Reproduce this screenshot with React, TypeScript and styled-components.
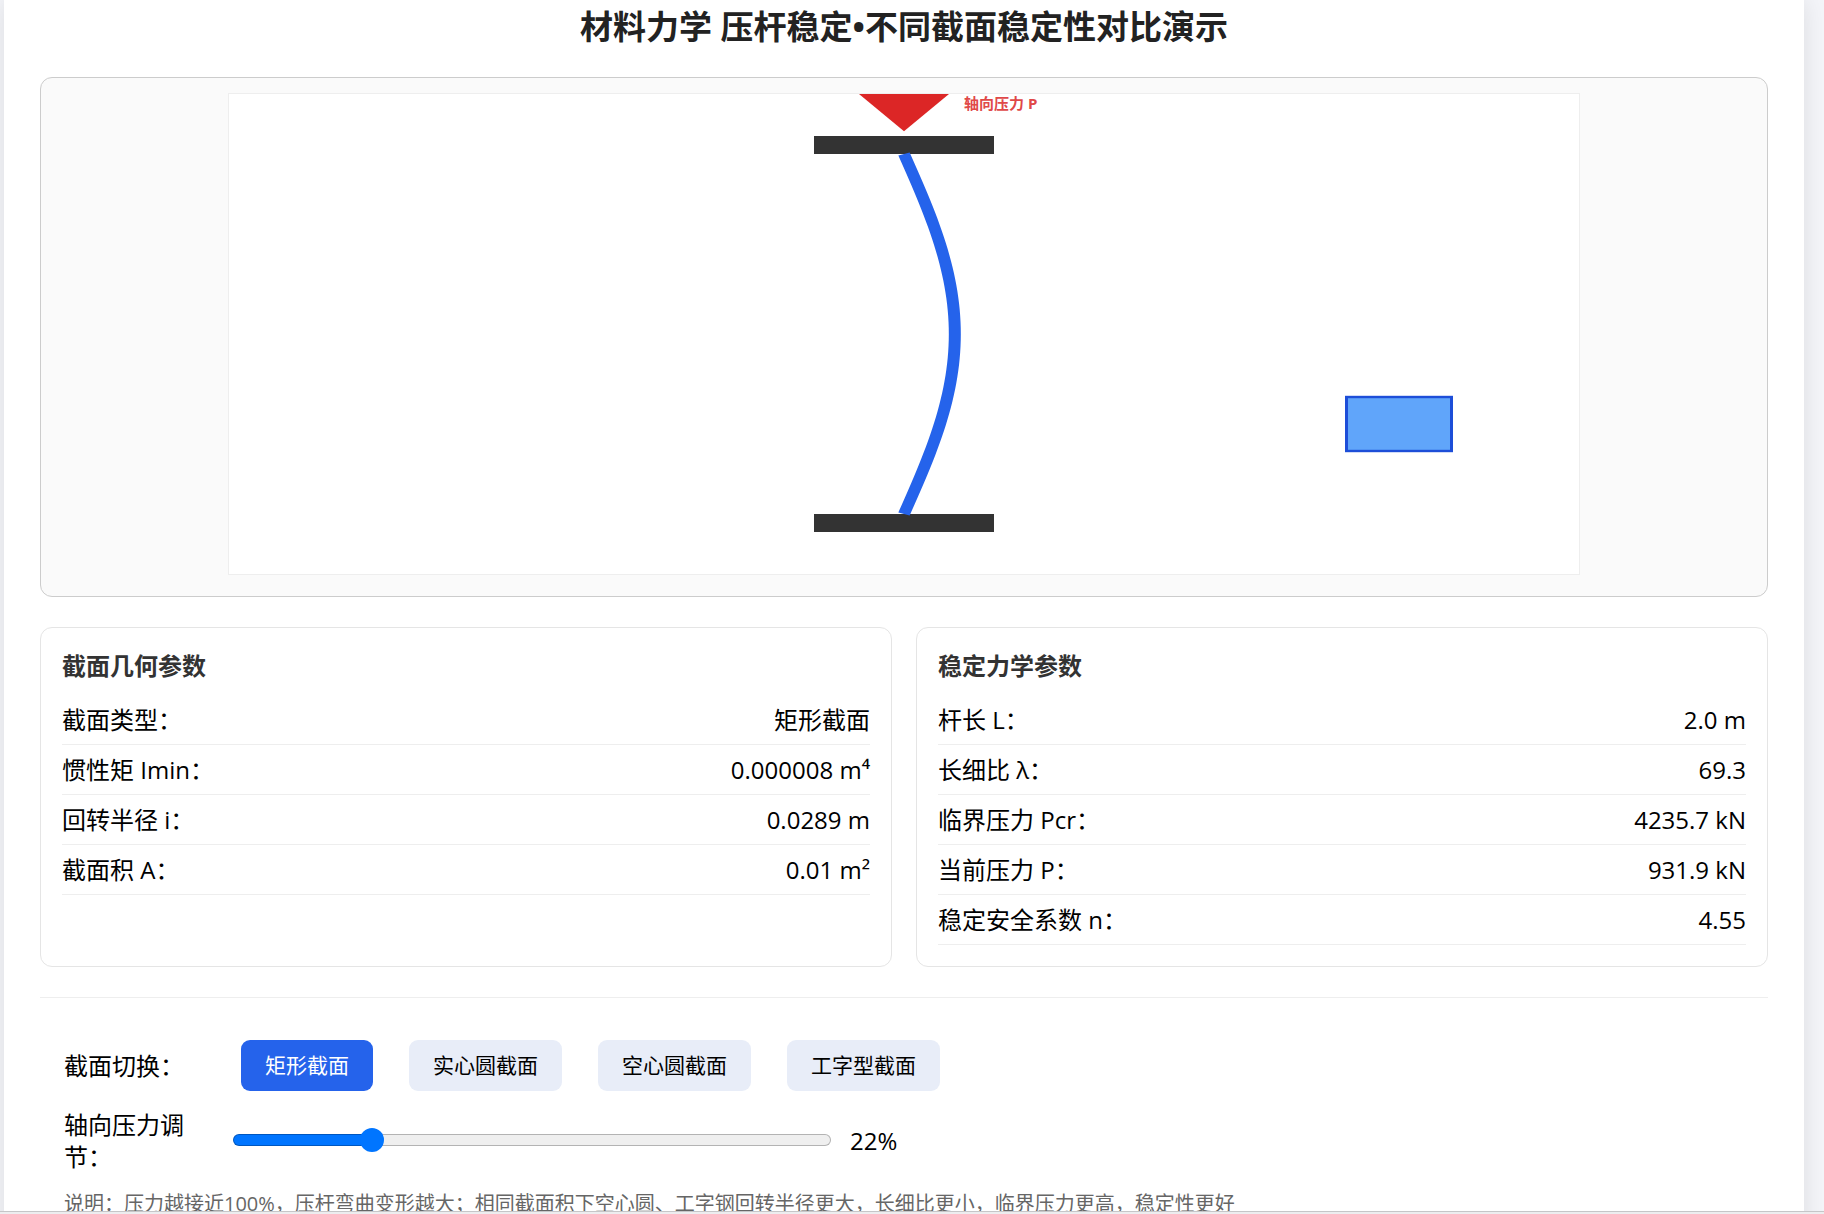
import React, { useState } from 'react';
import styled, { createGlobalStyle } from 'styled-components';

const GlobalStyle = createGlobalStyle`
  *, *::before, *::after { box-sizing: border-box; }
  body {
    margin: 0;
    background: #f4f5f9;
    color: #000;
    font-family: "Open Sans", "Noto Sans CJK SC", sans-serif;
    font-size: 24px;
    line-height: 32px;
  }
`;

const Screen = styled.div`
  display: flex;
  flex-direction: column;
  height: 100vh;
`;

const Scroller = styled.div`
  flex: 1;
  min-height: 0;
  overflow: hidden;
  padding: 0 20px 0 4px;
`;

const BottomEdge = styled.footer`
  height: 3px;
  border-top: 1px solid #c6c6c8;
  background: #ededef;
`;

const Sheet = styled.main`
  max-width: 1800px;
  min-height: 100%;
  margin: 0 auto;
  padding: 5px 36px 36px;
  background: #fff;
  box-shadow: 0 0 24px rgba(0, 0, 0, 0.1);
`;

const Title = styled.h1`
  margin: 0 0 28px;
  color: #222;
  font-size: 33px;
  line-height: 44px;
  font-weight: 700;
  text-align: center;
`;

const Stage = styled.section`
  display: flex;
  justify-content: center;
  padding: 15px 15px 21px;
  border: 1px solid #ccc;
  border-radius: 12px;
  background: #fafafa;
`;

const Drawing = styled.svg`
  display: block;
  width: 100%;
  max-width: 1352px;
  height: auto;
  border: 1px solid #eee;
  background: #fff;
`;

const ForceLabel = styled.text`
  fill: #e04848;
  font-size: 15px;
  font-weight: 700;
`;

const Panels = styled.div`
  display: grid;
  grid-template-columns: 1fr 1fr;
  gap: 24px;
  margin: 30px 0;
`;

const Panel = styled.section`
  padding: 21px;
  border: 1px solid #e5e5e5;
  border-radius: 12px;
`;

const PanelTitle = styled.h2`
  margin: 0 0 12px;
  color: #333;
  font-size: 24px;
  line-height: 34px;
  font-weight: 700;
`;

const ParamList = styled.dl`
  margin: 0;
`;

const ParamRow = styled.div`
  display: flex;
  justify-content: space-between;
  padding: 9px 0 8px;
  border-bottom: 1px solid #eee;
`;

const ParamName = styled.dt`
  margin: 0;
`;

const ParamValue = styled.dd`
  margin: 0;
`;

const Controls = styled.section`
  display: flex;
  flex-direction: column;
  gap: 18px;
  padding: 42px 24px 0;
  border-top: 1px solid #eee;
`;

const ControlRow = styled.div`
  display: flex;
  align-items: center;
  gap: 18px;
`;

const ControlName = styled.div`
  width: 150px;
`;

const ButtonGroup = styled.div`
  display: flex;
  flex-wrap: wrap;
  gap: 36px;
  padding: 0 9px;
`;

const SectionButton = styled.button<{ $active: boolean }>`
  padding: 12px 24px;
  border: 0;
  border-radius: 9px;
  background: ${(p) => (p.$active ? '#2563eb' : '#e8edf8')};
  color: ${(p) => (p.$active ? '#fff' : '#000')};
  font: inherit;
  font-size: 21px;
  line-height: 27px;
  cursor: pointer;
`;

const Slider = styled.input`
  appearance: none;
  width: 598px;
  height: 24px;
  margin: 0 1px 2px;
  background: transparent;
  cursor: pointer;

  &::-webkit-slider-runnable-track {
    height: 12px;
    border: 1px solid rgba(0, 0, 0, 0.25);
    border-radius: 6px;
    background: linear-gradient(to right, #0075ff var(--fill), #efefef var(--fill)) border-box;
  }

  &::-webkit-slider-thumb {
    appearance: none;
    width: 24px;
    height: 24px;
    margin-top: -7px;
    border-radius: 50%;
    background: #0075ff;
  }
`;

const Note = styled.p`
  margin: 0;
  color: #666;
  font-size: 20px;
  line-height: 26px;
`;

type SectionKind = 'rect' | 'solid' | 'hollow' | 'ibeam';

interface SectionSpec {
  kind: SectionKind;
  name: string;
  inertia: number;
  area: number;
}

const SECTIONS: SectionSpec[] = [
  { kind: 'rect', name: '矩形截面', inertia: 0.01 ** 2 / 12, area: 0.01 },
  { kind: 'solid', name: '实心圆截面', inertia: 0.01 ** 2 / (4 * Math.PI), area: 0.01 },
  { kind: 'hollow', name: '空心圆截面', inertia: 0.0000169, area: 0.01 },
  { kind: 'ibeam', name: '工字型截面', inertia: 0.0000213, area: 0.01 },
];

const LENGTH = 2;
const MODULUS = 206e9;

/* Sine half-wave between the two plates, in canvas units (900 x 400). */
function columnPath(deflection: number): string {
  const steps = 60;
  const points: string[] = [];
  for (let k = 0; k <= steps; k += 1) {
    const t = k / steps;
    const x = 450 + deflection * Math.sin(Math.PI * t);
    points.push(`${x.toFixed(2)} ${(50 + 300 * t).toFixed(2)}`);
  }
  return `M${points.join('L')}`;
}

function SectionShape({ kind }: { kind: SectionKind }) {
  const paint = { fill: '#60a5fa', stroke: '#1d4ed8', strokeWidth: 2 };
  if (kind === 'solid') return <circle cx="780" cy="275" r="28" {...paint} />;
  if (kind === 'hollow') {
    return (
      <>
        <circle cx="780" cy="275" r="32" {...paint} />
        <circle cx="780" cy="275" r="20" {...paint} fill="#fff" />
      </>
    );
  }
  if (kind === 'ibeam') {
    return <path d="M745 245h70v12h-29v36h29v12h-70v-12h29v-36h-29z" {...paint} />;
  }
  return <rect x="745" y="252.5" width="70" height="45" {...paint} />;
}

function Params({ title, rows }: { title: string; rows: [string, string][] }) {
  return (
    <Panel>
      <PanelTitle>{title}</PanelTitle>
      <ParamList>
        {rows.map(([name, value]) => (
          <ParamRow key={name}>
            <ParamName>{name}</ParamName>
            <ParamValue>{value}</ParamValue>
          </ParamRow>
        ))}
      </ParamList>
    </Panel>
  );
}

export default function App() {
  const [kind, setKind] = useState<SectionKind>('rect');
  const [load, setLoad] = useState(22);

  const section = SECTIONS.find((s) => s.kind === kind) ?? SECTIONS[0];
  const radius = Math.sqrt(section.inertia / section.area);
  const critical = (Math.PI ** 2 * MODULUS * section.inertia) / LENGTH ** 2 / 1000;
  const current = (critical * load) / 100;
  const fill = `${12 + (load / 100) * 574}px`;

  return (
    <Screen>
      <GlobalStyle />
      <Scroller>
        <Sheet>
          <Title>材料力学 压杆稳定•不同截面稳定性对比演示</Title>

          <Stage>
            <Drawing viewBox="0 0 1350 480" role="img" aria-label="压杆弯曲示意图">
              <g transform="scale(1.5 1.2)">
                <path d="M420 0h60l-30 31z" fill="#dc2626" />
                <rect x="390" y="35" width="120" height="15" fill="#333" />
                <rect x="390" y="350" width="120" height="15" fill="#333" />
                <path
                  d={columnPath(load * 1.54)}
                  fill="none"
                  stroke="#2563eb"
                  strokeWidth="8"
                  strokeLinejoin="round"
                />
                <SectionShape kind={kind} />
              </g>
              <ForceLabel x="735" y="15">轴向压力 P</ForceLabel>
            </Drawing>
          </Stage>

          <Panels>
            <Params
              title="截面几何参数"
              rows={[
                ['截面类型：', section.name],
                ['惯性矩 Imin：', `${section.inertia.toFixed(6)} m⁴`],
                ['回转半径 i：', `${radius.toFixed(4)} m`],
                ['截面积 A：', `${section.area} m²`],
              ]}
            />
            <Params
              title="稳定力学参数"
              rows={[
                ['杆长 L：', `${LENGTH.toFixed(1)} m`],
                ['长细比 λ：', (LENGTH / radius).toFixed(1)],
                ['临界压力 Pcr：', `${critical.toFixed(1)} kN`],
                ['当前压力 P：', `${current.toFixed(1)} kN`],
                ['稳定安全系数 n：', load > 0 ? (critical / current).toFixed(2) : '∞'],
              ]}
            />
          </Panels>

          <Controls>
            <ControlRow>
              <ControlName id="section-name">截面切换：</ControlName>
              <ButtonGroup role="group" aria-labelledby="section-name">
                {SECTIONS.map((s) => (
                  <SectionButton
                    key={s.kind}
                    type="button"
                    $active={s.kind === kind}
                    aria-pressed={s.kind === kind}
                    onClick={() => setKind(s.kind)}
                  >
                    {s.name}
                  </SectionButton>
                ))}
              </ButtonGroup>
            </ControlRow>
            <ControlRow>
              <ControlName as="label" htmlFor="load">轴向压力调节：</ControlName>
              <Slider
                id="load"
                type="range"
                min={0}
                max={100}
                value={load}
                onChange={(e) => setLoad(Number(e.target.value))}
                style={{ '--fill': fill } as React.CSSProperties}
              />
              <output htmlFor="load">{load}%</output>
            </ControlRow>
            <Note>
              说明：压力越接近100%，压杆弯曲变形越大；相同截面积下空心圆、工字钢回转半径更大，长细比更小，临界压力更高，稳定性更好
            </Note>
          </Controls>
        </Sheet>
      </Scroller>
      <BottomEdge />
    </Screen>
  );
}
